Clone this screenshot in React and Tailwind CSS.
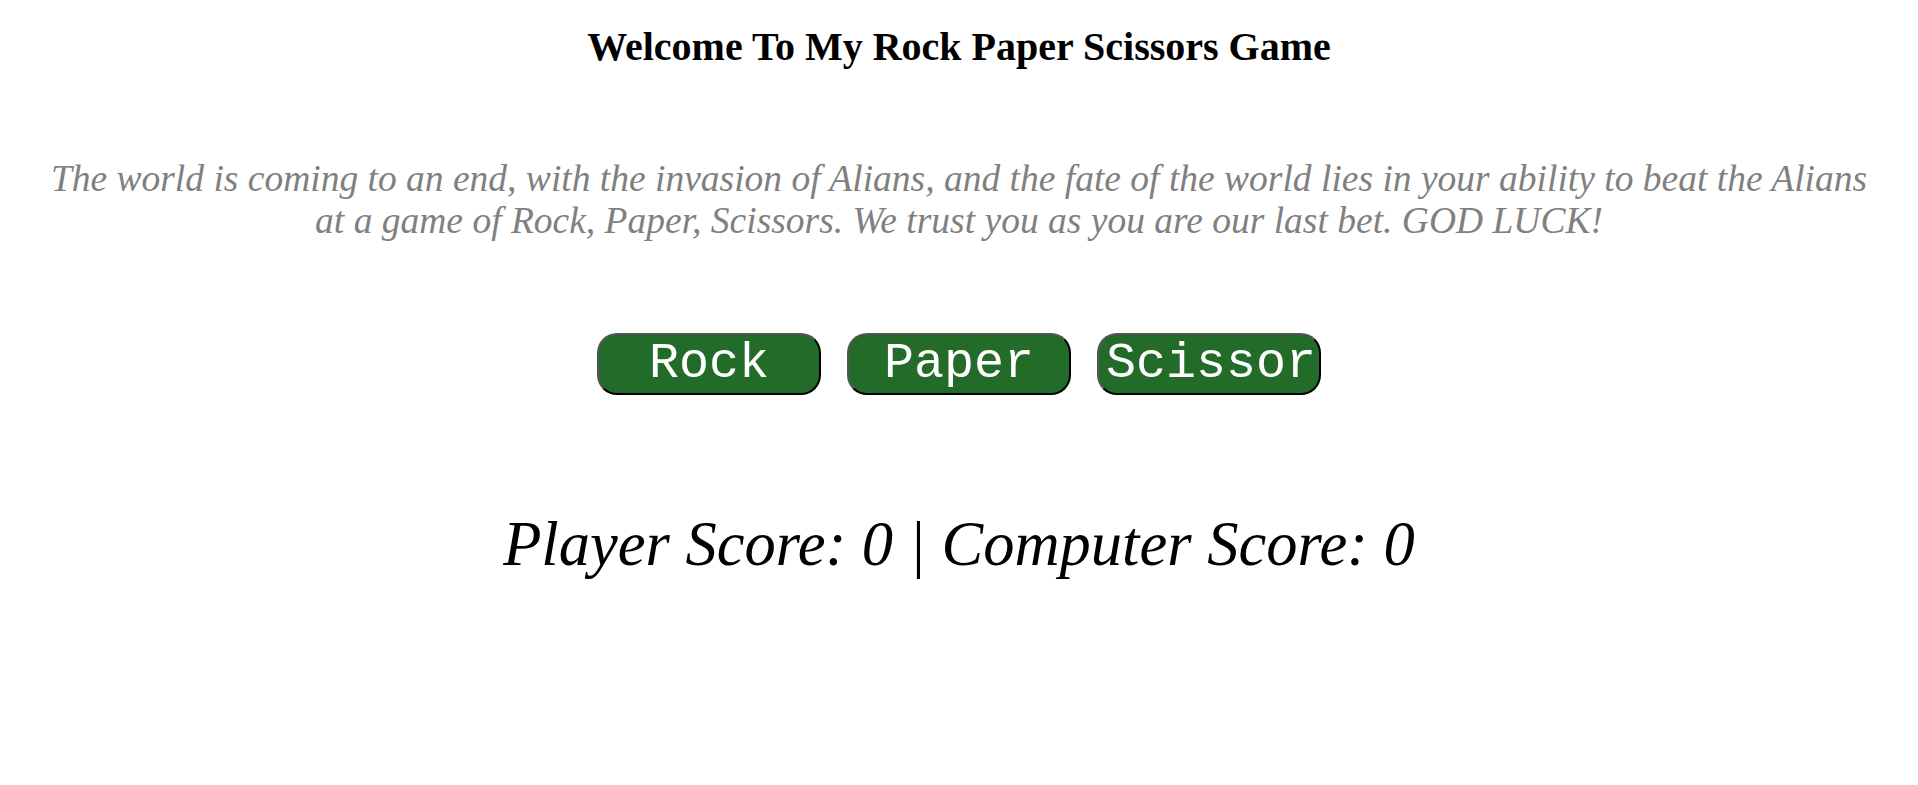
import React, { useState } from 'react';

const choices = ['Rock', 'Paper', 'Scissors'];

const App = () => {
  const [playerScore, setPlayerScore] = useState(0);
  const [computerScore, setComputerScore] = useState(0);

  const play = (choice) => {
    const computer = choices[Math.floor(Math.random() * 3)];
    if (choice === computer) return;
    const wins =
      (choice === 'Rock' && computer === 'Scissors') ||
      (choice === 'Paper' && computer === 'Rock') ||
      (choice === 'Scissors' && computer === 'Paper');
    if (wins) setPlayerScore((s) => s + 1);
    else setComputerScore((s) => s + 1);
  };

  return (
    <div className="min-h-screen bg-white flex flex-col items-center text-center font-['Liberation_Serif',serif]">
      <h1 className="mt-[23px] text-[40px] leading-[48px] font-bold text-black">
        Welcome To My Rock Paper Scissors Game
      </h1>

      <p className="mt-[87px] w-[1822px] text-[37.5px] leading-[42px] italic text-[#808080]">
        The world is coming to an end, with the invasion of Alians, and the fate of the world lies in your ability to beat the Alians at a game of Rock, Paper, Scissors. We trust you as you are our last bet. GOD LUCK!
      </p>

      {/* Buttons */}
      <div className="mt-[91px] flex gap-[26px]">
        {choices.map((choice) => (
          <button
            key={choice}
            onClick={() => play(choice)}
            className="w-[224px] h-[62px] px-[7px] overflow-hidden whitespace-nowrap text-center rounded-[20px] bg-[#236b29] text-white font-['Liberation_Mono',monospace] text-[50px] leading-[58px] border-2 border-t-[#555555] border-l-[#555555] border-r-black border-b-black"
          >
            {choice}
          </button>
        ))}
      </div>

      <div className="mt-[113px] text-[62.5px] leading-[72px] italic text-black">
        Player Score: {playerScore} | Computer Score: {computerScore}
      </div>
    </div>
  );
};

export default App;
